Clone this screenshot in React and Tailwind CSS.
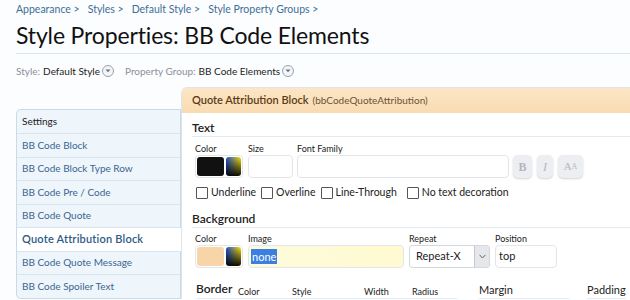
import React from "react";

const font = { fontFamily: "Lato, 'Open Sans', sans-serif" };

function Chevron() {
  return (
    <span className="inline-flex items-center justify-center w-[12px] h-[12px] rounded-full border border-[#9aa3ad] bg-[#f3f5f8] ml-[2px] align-middle">
      <svg width="6" height="4" viewBox="0 0 6 4"><path d="M0.5 0.5 L3 3.3 L5.5 0.5 Z" fill="#6b7480" /></svg>
    </span>
  );
}

function Box() {
  return <span className="inline-block w-[12px] h-[12px] border border-[#555] bg-white rounded-[1px] mr-[3px]" />;
}

function Picker() {
  return (
    <span className="w-[15px] h-[19px] rounded-[3px] bg-[linear-gradient(to_bottom,rgba(0,0,0,0),rgba(0,0,0,0.95)),linear-gradient(to_right,#1d4fd8,#ffe600)]" />
  );
}

const sideItems = [
  "BB Code Block",
  "BB Code Block Type Row",
  "BB Code Pre / Code",
  "BB Code Quote",
];

export default function App() {
  return (
    <div className="w-[630px] h-[300px] overflow-hidden bg-[#fcfdff] text-[#222]" style={font}>
      <div className="pl-4 pt-[1px] h-[18px] text-[10.5px] text-[#3f6f96] flex gap-[8px] items-center">
        <span>Appearance &gt;</span>
        <span>Styles &gt;</span>
        <span>Default Style &gt;</span>
        <span>Style Property Groups &gt;</span>
      </div>
      <h1 className="ml-4 text-[23px] leading-[34px] text-[#111] tracking-[-0.15px]">Style Properties: BB Code Elements</h1>
      <div className="ml-4 mt-[1px] border-t border-[#d9e6ee]" />
      <div className="ml-4 h-[33px] flex items-center text-[10px] pt-[1px]">
        <span className="text-[#8a9099]">Style:</span>
        <span className="ml-[3px] text-[#222]">Default Style</span>
        <Chevron />
        <span className="ml-[11px] text-[#8a9099]">Property Group:</span>
        <span className="ml-[3px] text-[#222]">BB Code Elements</span>
        <Chevron />
      </div>
      <div className="flex">
        <div className="ml-4 mt-[22px] w-[165px] shrink-0">
          <div className="border border-[#c9dbe8] border-r-0 rounded-l-[5px] bg-[#eef5fb] text-[10px] overflow-hidden">
            <div className="h-[24px] flex items-center pl-[5px] text-[#222] border-b border-[#d8e5ef] border-r border-r-[#c9dbe8]">Settings</div>
            {sideItems.map((s) => (
              <div key={s} className="h-[23.5px] flex items-center pl-[5px] text-[#3a6690] border-b border-[#d8e5ef] border-r border-r-[#c9dbe8]">{s}</div>
            ))}
            <div className="h-[23.5px] flex items-center pl-[5px] text-[#2d5a85] bg-white text-[11px] font-semibold border-b border-[#d8e5ef] tracking-[0.2px]">Quote Attribution Block</div>
            <div className="h-[23.5px] flex items-center pl-[5px] text-[#3a6690] border-b border-[#d8e5ef] border-r border-r-[#c9dbe8]">BB Code Quote Message</div>
            <div className="h-[23px] flex items-center pl-[5px] text-[#3a6690] border-r border-r-[#c9dbe8]">BB Code Spoiler Text</div>
          </div>
        </div>
        <div className="flex-1 border-l border-t border-[#dfe4ea] rounded-tl-[6px] overflow-hidden bg-white">
          <div className="h-[25px] flex items-center pl-[10px] bg-[linear-gradient(to_bottom,#fce6c6,#f9dbb2)] text-[11px]">
            <span className="text-[#5b3b14] font-semibold">Quote Attribution Block</span>
            <span className="ml-[4px] text-[#6b5236] text-[10px]">(bbCodeQuoteAttribution)</span>
          </div>
          <div className="pl-[10px] pt-[7px]">
            <div className="text-[12px] leading-[15px] font-semibold text-[#222] pb-[1px] border-b border-[#e4ebf1]">Text</div>
            <div className="flex pl-[3px] pt-[6px] text-[9px] text-[#222]">
              <div>
                <div className="h-[12px] leading-[12px]">Color</div>
                <div className="w-[48px] h-[23px] flex items-center gap-[2px] px-[1px] border border-[#e2e6eb] rounded-[4px]">
                  <span className="w-[28px] h-[19px] rounded-[3px] bg-[#111]" />
                  <Picker />
                </div>
              </div>
              <div className="ml-[5px]">
                <div className="h-[12px] leading-[12px]">Size</div>
                <div className="w-[45px] h-[23px] border border-[#e2e6eb] rounded-[4px] bg-white" />
              </div>
              <div className="ml-[4px]">
                <div className="h-[12px] leading-[12px]">Font Family</div>
                <div className="w-[212px] h-[23px] border border-[#e2e6eb] rounded-[4px] bg-white" />
              </div>
              <div className="flex gap-[5px] pt-[12px] ml-[4px]" style={{ fontFamily: "'Liberation Serif', serif" }}>
                <span className="w-[19px] h-[23px] rounded-[5px] bg-[#eceef2] shadow-[0_1px_2px_rgba(0,0,0,0.18)] flex items-center justify-center text-[12px] font-bold text-[#b3b7bd]">B</span>
                <span className="w-[16px] h-[23px] rounded-[5px] bg-[#eceef2] shadow-[0_1px_2px_rgba(0,0,0,0.18)] flex items-center justify-center text-[12px] italic text-[#b3b7bd]">I</span>
                <span className="w-[25px] h-[23px] rounded-[5px] bg-[#eceef2] shadow-[0_1px_2px_rgba(0,0,0,0.18)] flex items-center justify-center text-[11px] text-[#b3b7bd]">A<span className="text-[8px]">A</span></span>
              </div>
            </div>
            <div className="flex items-center pl-[4px] h-[30px] text-[10.5px] text-[#222]">
              <Box /><span>Underline</span>
              <span className="ml-[5px]" /><Box /><span>Overline</span>
              <span className="ml-[5px]" /><Box /><span>Line-Through</span>
              <span className="ml-[10px]" /><Box /><span>No text decoration</span>
            </div>
            <div className="text-[12px] leading-[15px] font-semibold text-[#222] pt-[3px] pb-[1px] border-b border-[#e4ebf1]">Background</div>
            <div className="flex pl-[3px] pt-[5px] text-[9px] text-[#222]">
              <div>
                <div className="h-[12px] leading-[12px]">Color</div>
                <div className="w-[48px] h-[23px] flex items-center gap-[2px] px-[1px] border border-[#e2e6eb] rounded-[4px]">
                  <span className="w-[28px] h-[19px] rounded-[3px] bg-[#f8d5a9]" />
                  <Picker />
                </div>
              </div>
              <div className="ml-[5px]">
                <div className="h-[12px] leading-[12px]">Image</div>
                <div className="w-[156px] h-[23px] border border-[#e2e6eb] rounded-[4px] bg-[linear-gradient(to_right,#fdfbdc,#fffad0)] flex items-center pl-[2px] text-[11px]">
                  <span className="bg-[#3b7fe0] text-white px-[1px] leading-[15px]">none</span>
                </div>
              </div>
              <div className="ml-[5px]">
                <div className="h-[12px] leading-[12px]">Repeat</div>
                <div className="w-[81px] h-[23px] border border-[#d3d8de] rounded-[3px] bg-white flex items-center text-[11px]">
                  <span className="pl-[6px] flex-1">Repeat-X</span>
                  <span className="w-[15px] h-full bg-[#e5e7ea] border-l border-[#c4c8cd] flex items-center justify-center">
                    <svg width="7" height="5" viewBox="0 0 7 5"><path d="M0.5 0.8 L3.5 4 L6.5 0.8" stroke="#666" strokeWidth="1" fill="none" /></svg>
                  </span>
                </div>
              </div>
              <div className="ml-[5px]">
                <div className="h-[12px] leading-[12px]">Position</div>
                <div className="w-[62px] h-[23px] border border-[#e2e6eb] rounded-[4px] bg-white flex items-center pl-[3px] text-[11px]">top</div>
              </div>
            </div>
            <div className="flex items-end h-[31px] text-[9px] text-[#222] pl-[4px]">
              <span className="text-[12px] font-semibold w-[42px] border-b border-[#e4ebf1]">Border</span>
              <span className="w-[54px] border-b border-[#e4ebf1]">Color</span>
              <span className="w-[72px] border-b border-[#e4ebf1]">Style</span>
              <span className="w-[48px] border-b border-[#e4ebf1]">Width</span>
              <span className="w-[45px] border-b border-[#e4ebf1]">Radius</span>
              <span className="ml-[22px] w-[90px] text-[11px] border-b border-[#e4ebf1]">Margin</span>
              <span className="ml-[18px] text-[11px] border-b border-[#e4ebf1]">Padding</span>
            </div>
          </div>
        </div>
      </div>
    </div>
  );
}
